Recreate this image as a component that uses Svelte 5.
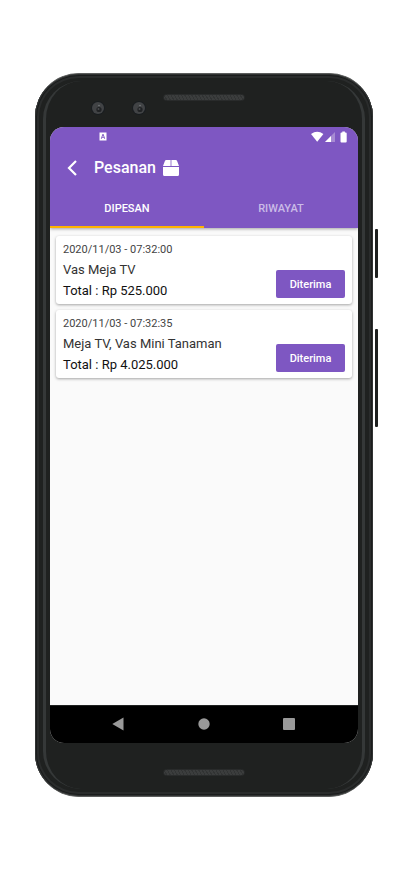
<script>
  const orders = [
    { date: '2020/11/03 - 07:32:00', items: 'Vas Meja TV', total: 'Rp 525.000' },
    { date: '2020/11/03 - 07:32:35', items: 'Meja TV, Vas Mini Tanaman', total: 'Rp 4.025.000' }
  ];
  let active = $state(0);
  const tabs = ['DIPESAN', 'RIWAYAT'];
</script>

<div class="page">
  <div class="phone">
    <span class="side power"></span>
    <span class="side volume"></span>
    <div class="rim"></div>
    <div class="top">
      <svg class="lens first" viewBox="0 0 14 14" aria-hidden="true">
        <circle cx="7" cy="7" r="7" fill="#191d20" /><circle cx="7" cy="7" r="6" fill="#414345" />
        <circle cx="8" cy="8.500" r="2.600" fill="#202224" /><circle cx="8" cy="4.500" r=".8" fill="#777a7c" /><circle cx="7.500" cy="8" r="1" fill="#4b4d50" />
      </svg>
      <svg class="lens second" viewBox="0 0 14 14" aria-hidden="true">
        <circle cx="7" cy="7" r="7" fill="#191d20" /><circle cx="7" cy="7" r="6" fill="#414345" />
        <circle cx="8" cy="8.500" r="2.600" fill="#202224" /><circle cx="8" cy="4.500" r=".8" fill="#777a7c" /><circle cx="7.500" cy="8" r="1" fill="#4b4d50" />
      </svg>
      <span class="speaker"></span>
    </div>

    <div class="screen">
      <header>
        <div class="status">
          <svg class="note" width="8" height="9" viewBox="0 0 8 9" aria-hidden="true">
            <path fill="#fff" fill-rule="evenodd" d="M.5.5h7v8h-7zM3.500 2 1.800 6.800h1l.3-1h1.800l.3 1h1L4.500 2zM4 3.300l.6 1.700H3.400z" />
          </svg>
          <svg width="37" height="12" viewBox="0 0 37 12" aria-hidden="true">
            <path fill="#fff" d="M0 3Q6.200-1.500 12.400 3L6.200 10.800z" />
            <path fill="#a78bd3" d="M14 11 24 1v10z" />
            <path fill="#fff" d="M14 11l6-6v6z" />
            <path fill="#fff" d="M29.500 2.500q0-1 1-1h.8V.5h2.600v1h.8q1 0 1 1v8q0 1-1 1h-4.200q-1 0-1-1z" />
          </svg>
        </div>
        <div class="bar">
          <button class="back" aria-label="Kembali">
            <svg width="10" height="16" viewBox="0 0 10 16"><path d="M9 1 2 8l7 7" fill="none" stroke="#fff" stroke-width="2.200" /></svg>
          </button>
          <h1>Pesanan</h1>
          <svg width="16" height="16" viewBox="0 0 16 16" aria-hidden="true">
            <path fill="#fff" d="M7.600 0v6H0L1.800 1.200Q2.200 0 3.400 0zM8.400 0h4.200q1.200 0 1.600 1.200L16 6H8.400zM0 7h16v7.500q0 1.500-1.500 1.500h-13Q0 16 0 14.500z" />
          </svg>
        </div>
        <nav>
          {#each tabs as tab, i}
            <button class="tab" class:active={active === i} onclick={() => (active = i)}>{tab}</button>
          {/each}
        </nav>
      </header>

      <main>
        {#each orders as order}
          <article>
            <div class="info">
              <p class="date">{order.date}</p>
              <p class="items">{order.items}</p>
              <p class="total">Total : {order.total}</p>
            </div>
            <button class="accept">Diterima</button>
          </article>
        {/each}
      </main>

      <footer>
        <button aria-label="Back"><svg width="12" height="14" viewBox="0 0 12 14"><path d="M11.500.5v13L.3 7z" fill="#999" /></svg></button>
        <button aria-label="Home"><svg width="12" height="12" viewBox="0 0 12 12"><circle cx="6" cy="6" r="5.700" fill="#999" /></svg></button>
        <button aria-label="Recents"><svg width="12" height="12" viewBox="0 0 12 12"><rect width="12" height="12" rx="1" fill="#999" /></svg></button>
      </footer>
    </div>
    <div class="bottom"><span class="speaker"></span></div>
  </div>
</div>

<style>
  :global(body) { background: #fff; font-family: Roboto, "Liberation Sans", sans-serif; }
  * { box-sizing: border-box; }
  h1, p { margin: 0; }
  button { border: 0; padding: 0; background: none; font-family: inherit; cursor: pointer; }
  svg { display: block; flex: none; }
  .page { min-height: 100vh; display: flex; padding: 73px 39px 73px 35px; }
  .phone {
    position: relative; flex: 1; display: flex; flex-direction: column; padding: 0 15px;
    background: #1f2120; border: 1px solid #5c5e5d; border-width: 1px 0; border-radius: 44px;
    box-shadow: inset 0 0 0 1px #303232, inset 0 0 0 2px #1a1c1c, inset 0 0 0 4px #2a2c2c;
  }
  .rim {
    position: absolute; inset: 7px 8px; border: solid #353838; border-width: 0 3px; border-radius: 38px; pointer-events: none;
  }
  .side { position: absolute; right: -5px; width: 3px; background: #1f2120; border-radius: 1px; }
  .power { top: 155px; height: 49px; }
  .volume { top: 255px; height: 98px; }
  .top { height: 53px; position: relative; display: flex; justify-content: center; padding-top: 20px; }
  .bottom { height: 53px; display: flex; justify-content: center; align-items: flex-start; padding-top: 26px; }
  .speaker {
    width: 82px; height: 7px; border-radius: 4px; border: 1px solid #292b2b;
    background: repeating-linear-gradient(60deg, #3b3d3d 0 2px, #313333 2px 3px);
  }
  .lens { position: absolute; top: 27px; width: 14px; height: 14px; }
  .first { left: 41px; }
  .second { left: 82px; }
  .screen { flex: 1; display: flex; flex-direction: column; border-radius: 14px; overflow: hidden; background: #fafafa; }
  header { background: #7e57c2; box-shadow: 0 1px 3px rgba(0, 0, 0, .35); }
  .status { height: 19px; display: flex; justify-content: space-between; align-items: center; padding: 0 10px 0 49px; }
  .bar { height: 43px; display: flex; align-items: center; padding-left: 17px; }
  .back { margin-right: 17px; }
  h1 { font-size: 16px; line-height: 19px; font-weight: 500; color: #fff; margin-right: 7px; }
  nav { display: flex; height: 39px; }
  .tab { flex: 1; padding-top: 2px; font-size: 11px; line-height: 16px; font-weight: 500; color: #cbbce7; border-bottom: 2px solid transparent; }
  .tab.active { color: #fff; border-color: #ffb300; }
  main { flex: 1; display: flex; flex-direction: column; gap: 6px; padding: 8px 6px; }
  article {
    display: flex; justify-content: space-between; align-items: flex-end; padding: 5px 7px 3px;
    background: #fff; border-radius: 3px; box-shadow: 0 1px 3px rgba(0, 0, 0, .35);
  }
  .date { font-size: 11px; line-height: 18px; color: #444; }
  .items { font-size: 13px; line-height: 21px; color: #333; }
  .total { font-size: 13px; line-height: 21px; color: #111; }
  .accept { width: 69px; height: 28px; margin-bottom: 3px; border-radius: 2px; background: #7e57c2; color: #fff; font-size: 11px; font-weight: 500; }
  footer { height: 38px; background: #000; display: flex; justify-content: space-between; align-items: center; padding: 0 63px 2px 62px; border-top: 1px solid #1f2120; }
</style>
